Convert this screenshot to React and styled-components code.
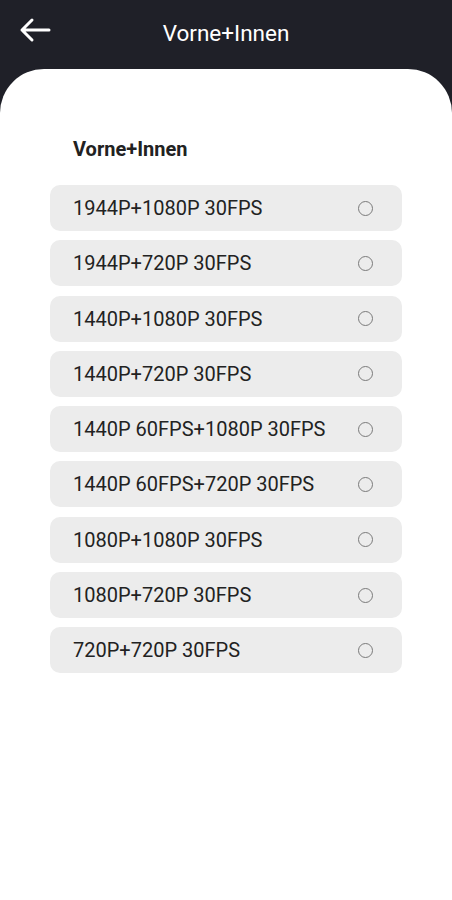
import React from "react";
import styled, { createGlobalStyle } from "styled-components";

const Global = createGlobalStyle`
  html, body { margin: 0; padding: 0; background: #1f2028; }
  body { font-family: Roboto, "Noto Sans", "Liberation Sans", sans-serif; }
`;

const Page = styled.div`
  width: 452px;
  min-height: 900px;
  background: #1f2028;
  display: flex;
  flex-direction: column;
`;

const Header = styled.header`
  height: 69px;
  position: relative;
  display: flex;
  align-items: flex-start;
  justify-content: center;
`;

const Back = styled.button`
  position: absolute;
  left: 17px;
  top: 14px;
  width: 36px;
  height: 32px;
  padding: 0;
  border: none;
  background: none;
  display: flex;
  align-items: center;
  justify-content: center;
`;

const Title = styled.h1`
  margin: 18px 0 0;
  font-size: 22.5px;
  line-height: 30px;
  font-weight: 400;
  color: #fff;
`;

const Panel = styled.main`
  flex: 1;
  background: #fff;
  border-radius: 44px 44px 0 0;
  padding: 66px 50px 40px 50px;
`;

const Section = styled.h2`
  margin: 0 0 22px 23px;
  font-size: 20px;
  font-weight: 700;
  color: #222;
  line-height: 28px;
`;

const List = styled.div`
  display: flex;
  flex-direction: column;
  gap: 9.3px;
`;

const Row = styled.div`
  height: 46px;
  background: #ececec;
  border-radius: 10px;
  display: flex;
  align-items: center;
  justify-content: space-between;
  padding: 0 29px 0 23px;
  box-sizing: border-box;
`;

const Label = styled.span`
  font-size: 20px;
  color: #222;
`;

const Radio = styled.span`
  width: 13px;
  height: 13px;
  border: 1.3px solid #7a7a7a;
  border-radius: 50%;
`;

const options = [
  "1944P+1080P 30FPS",
  "1944P+720P 30FPS",
  "1440P+1080P 30FPS",
  "1440P+720P 30FPS",
  "1440P 60FPS+1080P 30FPS",
  "1440P 60FPS+720P 30FPS",
  "1080P+1080P 30FPS",
  "1080P+720P 30FPS",
  "720P+720P 30FPS",
];

export default function App() {
  return (
    <Page>
      <Global />
      <Header>
        <Back aria-label="back">
          <svg width="32" height="26" viewBox="0 0 32 26" fill="none">
            <path d="M30 13H3M13 3L3 13l10 10" stroke="#fff" strokeWidth="3" strokeLinecap="round" strokeLinejoin="round" />
          </svg>
        </Back>
        <Title>Vorne+Innen</Title>
      </Header>
      <Panel>
        <Section>Vorne+Innen</Section>
        <List>
          {options.map((o) => (
            <Row key={o}>
              <Label>{o}</Label>
              <Radio />
            </Row>
          ))}
        </List>
      </Panel>
    </Page>
  );
}
